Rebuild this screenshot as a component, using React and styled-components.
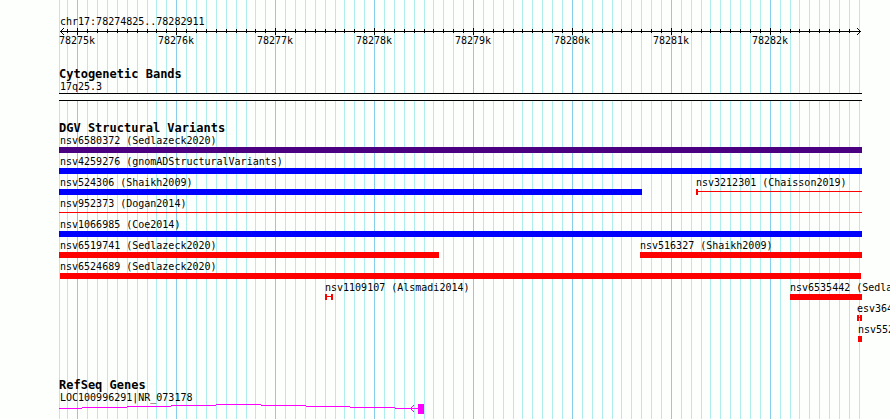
import React from "react";
import styled, { createGlobalStyle } from "styled-components";

const GlobalStyle = createGlobalStyle`
  body {
    margin: 0;
    background: #fdfffc;
    color: #000;
    font-family: "DejaVu Sans Mono", "Liberation Mono", monospace;
    font-size: 10px;
    line-height: 13px;
  }
`;

const Page = styled.main`
  overflow: hidden;
  min-height: 100vh;
  box-sizing: border-box;
  padding: 0 28px 0 59px;
  display: grid;
`;

const Panel = styled.div`
  position: relative;
  min-width: 0;
  display: flex;
  flex-direction: column;
  gap: 20px;
  padding: 15px 0 5px;
`;

const GridLines = styled.svg`
  position: absolute;
  inset: 0;
  width: 100%;
  height: 100%;
  shape-rendering: crispEdges;
`;

const Track = styled.section`
  position: relative;
  margin-top: ${(p) => p.$gap || 0}px;
`;

const Title = styled.h2`
  margin: 0;
  box-sizing: border-box;
  height: 13px;
  padding-top: 1px;
  font-size: 12px;
  line-height: 13px;
  font-weight: bold;
  white-space: nowrap;
`;

const Label = styled.div`
  padding-left: ${(p) => (p.$flush ? 0 : 1)}px;
  height: 13px;
  white-space: nowrap;
`;

const Ruler = styled.svg`
  display: block;
  width: 100%;
  height: ${(p) => p.$height}px;
  overflow: visible;
  shape-rendering: crispEdges;
`;

const TickLabels = styled.div`
  display: grid;
  height: 13px;
`;

const TickLabel = styled.span`
  grid-area: 1 / 1;
  justify-self: start;
  width: 36px;
`;

const Band = styled.div`
  height: 6px;
  border: solid #000;
  border-width: 1px 0;
  background: #fdfffc;
`;

const Lane = styled.div`
  display: grid;
  height: 21px;
`;

const Feature = styled.div`
  grid-area: 1 / 1;
  min-width: 0;
`;

const Bar = styled.div`
  height: 6px;
  background: ${(p) => p.$color};
`;

const Thin = styled.div`
  display: flow-root;
  height: 6px;
  box-sizing: border-box;
  border: solid ${(p) => p.$color};
  border-width: 0 ${(p) => (p.$caps === "both" ? 2 : 0)}px 0 ${(p) => (p.$caps ? 2 : 0)}px;

  &::before {
    content: "";
    display: block;
    height: 1px;
    margin-top: 2px;
    background: ${(p) => p.$color};
  }
`;

const SPAN = 803;
const pct = (x) => `${(x / SPAN) * 100}%`;

const STEP = 9.8924;
const FIRST = 18.84;
const ticks = Array.from({ length: 81 }, (_, i) => {
  const n = i - 1;
  return { x: Math.floor(FIRST + n * STEP), major: n % 10 === 0, n };
}).filter((t) => t.x < SPAN);

const INDIGO = "#4b0082";
const BLUE = "#0000ff";
const RED = "#ff0000";
const MAGENTA = "#ff00ff";

const lanes = [
  [{ name: "nsv6580372 (Sedlazeck2020)", from: 0, to: 803, color: INDIGO }],
  [{ name: "nsv4259276 (gnomADStructuralVariants)", from: 0, to: 803, color: BLUE }],
  [
    { name: "nsv524306 (Shaikh2009)", from: 0, to: 583, color: BLUE },
    { name: "nsv3212301 (Chaisson2019)", from: 637, to: 803, color: RED, thin: true, caps: "left" },
  ],
  [{ name: "nsv952373 (Dogan2014)", from: 0, to: 803, color: RED, thin: true }],
  [{ name: "nsv1066985 (Coe2014)", from: 0, to: 803, color: BLUE }],
  [
    { name: "nsv6519741 (Sedlazeck2020)", from: 0, to: 380, color: RED },
    { name: "nsv516327 (Shaikh2009)", from: 581, to: 803, color: RED },
  ],
  [{ name: "nsv6524689 (Sedlazeck2020)", from: 1, to: 802, color: RED }],
  [
    { name: "nsv1109107 (Alsmadi2014)", from: 266, to: 274, color: RED, thin: true, caps: "both" },
    { name: "nsv6535442 (Sedla", from: 731, to: 803, color: RED },
  ],
  [{ name: "esv364", from: 798, to: 803, color: RED, thin: true, caps: "both" }],
  [{ name: "nsv552", from: 799, to: 803, color: RED }],
];

// Intron line: [start, end, y] segments rising to the middle of the gene.
const intron = [
  [0, 23, 4],
  [23, 68, 3],
  [68, 112, 2],
  [112, 157, 1],
  [157, 202, 0],
  [202, 247, 1],
  [247, 291, 2],
  [291, 336, 3],
  [336, 359, 4],
];

function Axis() {
  return (
    <Ruler $height={6} aria-hidden="true">
      <rect x={pct(1)} y="3" width={pct(801)} height="1" />
      {ticks
        .filter((t) => t.x > 4 && t.x < 800)
        .map((t) => (
          <rect key={t.n} x={pct(t.x)} y={t.major ? 0 : 1} width="1" height={t.major ? 7 : 4} />
        ))}
      <svg x={pct(1)} y="0" overflow="visible">
        <path d="M0 3h1v1h-1z M1 2h1v1h-1z M2 1h1v1h-1z M3 0h1v1h-1z M1 4h1v1h-1z M2 5h1v1h-1z M3 6h1v1h-1z" />
      </svg>
      <svg x={pct(802)} y="0" overflow="visible">
        <path d="M-1 3h1v1h-1z M-2 2h1v1h-1z M-3 1h1v1h-1z M-4 0h1v1h-1z M-2 4h1v1h-1z M-3 5h1v1h-1z M-4 6h1v1h-1z" />
      </svg>
    </Ruler>
  );
}

function Variant({ item }) {
  const left = { marginLeft: pct(item.from) };
  const size = { marginLeft: pct(item.from), width: pct(item.to - item.from) };
  const inset = item.from > 1;
  return (
    <Feature>
      <Label $flush={inset} style={inset ? left : undefined}>
        {item.name}
      </Label>
      {item.thin ? (
        <Thin $color={item.color} $caps={item.caps} style={size} />
      ) : (
        <Bar $color={item.color} style={size} />
      )}
    </Feature>
  );
}

export default function App() {
  return (
    <>
      <GlobalStyle />
      <Page>
        <Panel>
          <GridLines aria-hidden="true">
            <rect x="0" y="0" width="1" height="100%" fill="#afeeee" />
            {ticks.map((t) => (
              <rect
                key={t.n}
                x={pct(t.x)}
                y="0"
                width="1"
                height="100%"
                fill={t.major ? "#87ceeb" : "#afeeee"}
              />
            ))}
          </GridLines>

          <Track>
            <Label>chr17:78274825..78282911</Label>
            <Axis />
            <TickLabels>
              {ticks
                .filter((t) => t.major)
                .map((t) => (
                  <TickLabel key={t.n} style={{ marginLeft: `calc(${pct(t.x)} - 18px)` }}>
                    {78275 + t.n / 10}k
                  </TickLabel>
                ))}
            </TickLabels>
          </Track>

          <Track>
            <Title>Cytogenetic Bands</Title>
            <Label>17q25.3</Label>
            <Band />
          </Track>

          <Track>
            <Title>DGV Structural Variants</Title>
            {lanes.map((lane) => (
              <Lane key={lane[0].name}>
                {lane.map((item) => (
                  <Variant key={item.name} item={item} />
                ))}
              </Lane>
            ))}
          </Track>

          <Track $gap={14}>
            <Title>RefSeq Genes</Title>
            <Label>LOC100996291|NR_073178</Label>
            <Ruler $height={10} fill={MAGENTA} aria-hidden="true">
              {intron.map(([from, to, y]) => (
                <rect key={from} x={pct(from)} y={y} width={pct(to - from)} height="1" />
              ))}
              <svg x={pct(352)} y="0" overflow="visible">
                <path d="M-1 4h1v1h-1z M0 3h1v1h-1z M1 2h1v1h-1z M2 1h1v1h-1z M0 5h1v1h-1z M1 6h1v1h-1z M2 7h1v1h-1z" />
              </svg>
              <rect x={pct(359)} y="0" width="6" height="10" />
            </Ruler>
          </Track>
        </Panel>
      </Page>
    </>
  );
}
